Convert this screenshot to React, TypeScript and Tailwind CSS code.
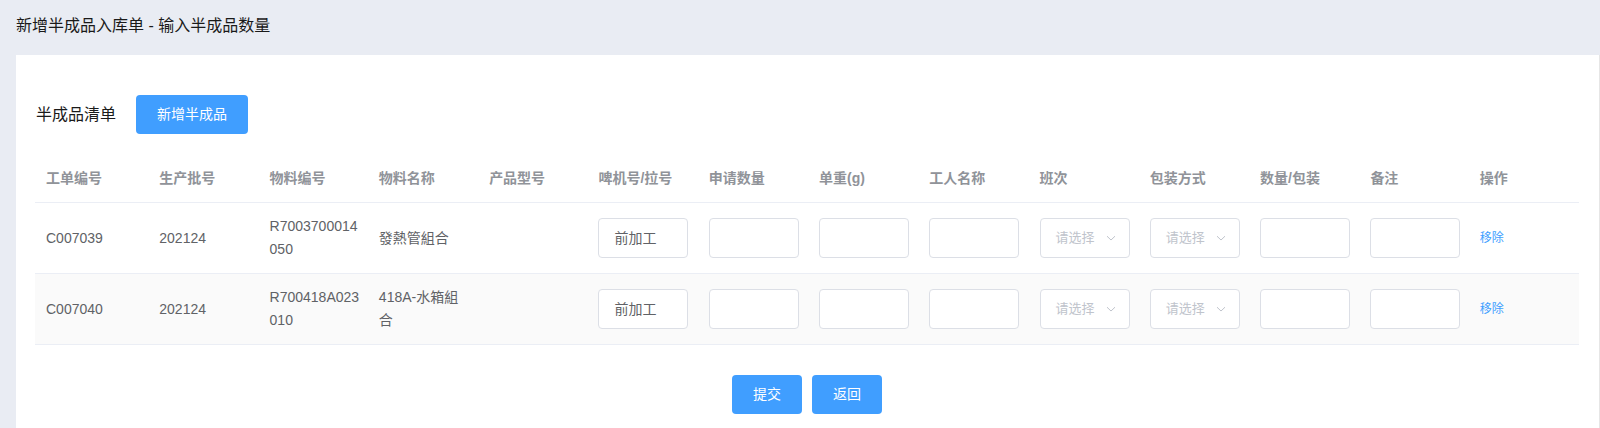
import React from "react";

type Row = {
  order: string;
  batch: string;
  code: string;
  name: string;
  model: string;
  machine: string;
};

const rows: Row[] = [
  { order: "C007039", batch: "202124", code: "R7003700014050", name: "發熱管組合", model: "", machine: "前加工" },
  { order: "C007040", batch: "202124", code: "R700418A023010", name: "418A-水箱組合", model: "", machine: "前加工" },
];

const headers = [
  "工单编号",
  "生产批号",
  "物料编号",
  "物料名称",
  "产品型号",
  "啤机号/拉号",
  "申请数量",
  "单重(g)",
  "工人名称",
  "班次",
  "包装方式",
  "数量/包装",
  "备注",
  "操作",
];

const headerPad = [
  "pl-[11px] pr-[8px]",
  "pl-[14px] pr-[6px]",
  "pl-[14px] pr-[6px]",
  "pl-[13px] pr-[6px]",
  "pl-[13px] pr-[6px]",
  "pl-[12px] pr-[6px]",
  "pl-[12px] pr-[6px]",
  "pl-[12px] pr-[6px]",
  "pl-[12px] pr-[6px]",
  "pl-[12px] pr-[6px]",
  "pl-[12px] pr-[6px]",
  "pl-[12px] pr-[6px]",
  "pl-[12px] pr-[6px]",
  "pl-[11px] pr-[6px]",
];

function TextInput({ value }: { value?: string }) {
  return (
    <div className="w-[90px] h-[40px] rounded-[4px] border border-[#dcdfe6] bg-white flex items-center px-[15px] text-[14px] text-[#606266]">
      {value}
    </div>
  );
}

function SelectBox() {
  return (
    <div className="w-[90px] h-[40px] rounded-[4px] border border-[#dcdfe6] bg-white flex items-center justify-between pl-[15px] pr-[12px] text-[13px] text-[#c0c4cc]">
      <span>请选择</span>
      <svg width="12" height="12" viewBox="0 0 12 12" fill="none">
        <path d="M2 4.2 L6 8 L10 4.2" stroke="#c0c4cc" strokeWidth="1" />
      </svg>
    </div>
  );
}

const textCell = "py-[12px] align-middle text-[14px] leading-[23px] text-[#606266] border-b border-[#ebeef5]";
const inputCell = "py-[12px] pl-[12px] pr-0 align-middle border-b border-[#ebeef5]";

export default function App() {
  return (
    <div
      className="min-h-[428px] bg-[#e9ecf3]"
      style={{ fontFamily: '"Liberation Sans", "Noto Sans CJK SC", sans-serif' }}
    >
      <div className="h-[55px] pl-4 pt-[16px] text-[16px] leading-[20px] text-[#1a1a1a]">
        新增半成品入库单 - 输入半成品数量
      </div>
      <div className="ml-4 bg-white border-r border-[#e6e6e6] pl-[19px] pr-[20px] pt-[40px] pb-[20px]">
        <div className="flex items-center h-[39px]">
          <span className="pl-[1px] text-[16px] text-[#1a1a1a]">半成品清单</span>
          <button className="ml-[20px] w-[112px] h-[39px] rounded-[4px] bg-[#409eff] text-white text-[14px]">
            新增半成品
          </button>
        </div>

        <table className="mt-[20px] w-full table-fixed border-collapse">
          <thead>
            <tr>
              {headers.map((h, i) => (
                <th
                  key={h}
                  className={`text-left font-bold text-[14px] text-[#909399] leading-[23px] pt-[13px] pb-[12px] border-b border-[#ebeef5] ${headerPad[i]}`}
                >
                  {h}
                </th>
              ))}
            </tr>
          </thead>
          <tbody>
            {rows.map((r, i) => (
              <tr key={r.order} className={i % 2 === 1 ? "bg-[#fafafa]" : "bg-white"}>
                <td className={`${textCell} pl-[11px] pr-[8px]`}>{r.order}</td>
                <td className={`${textCell} pl-[14px] pr-[6px]`}>{r.batch}</td>
                <td className={`${textCell} pl-[14px] pr-[6px] break-all`}>{r.code}</td>
                <td className={`${textCell} pl-[13px] pr-[6px] break-all`}>{r.name}</td>
                <td className={`${textCell} pl-[13px] pr-[6px]`}>{r.model}</td>
                <td className={inputCell}>
                  <TextInput value={r.machine} />
                </td>
                <td className={inputCell}>
                  <TextInput />
                </td>
                <td className={inputCell}>
                  <TextInput />
                </td>
                <td className={inputCell}>
                  <TextInput />
                </td>
                <td className={inputCell}>
                  <SelectBox />
                </td>
                <td className={inputCell}>
                  <SelectBox />
                </td>
                <td className={inputCell}>
                  <TextInput />
                </td>
                <td className={inputCell}>
                  <TextInput />
                </td>
                <td className="py-[12px] pl-[11px] pr-[6px] align-middle text-[12px] leading-[23px] text-[#409eff] border-b border-[#ebeef5]">
                  移除
                </td>
              </tr>
            ))}
          </tbody>
        </table>

        <div className="mt-[30px] flex justify-center gap-[10px]">
          <button className="w-[70px] h-[39px] rounded-[4px] bg-[#409eff] text-white text-[14px]">提交</button>
          <button className="w-[70px] h-[39px] rounded-[4px] bg-[#409eff] text-white text-[14px]">返回</button>
        </div>
      </div>
    </div>
  );
}
